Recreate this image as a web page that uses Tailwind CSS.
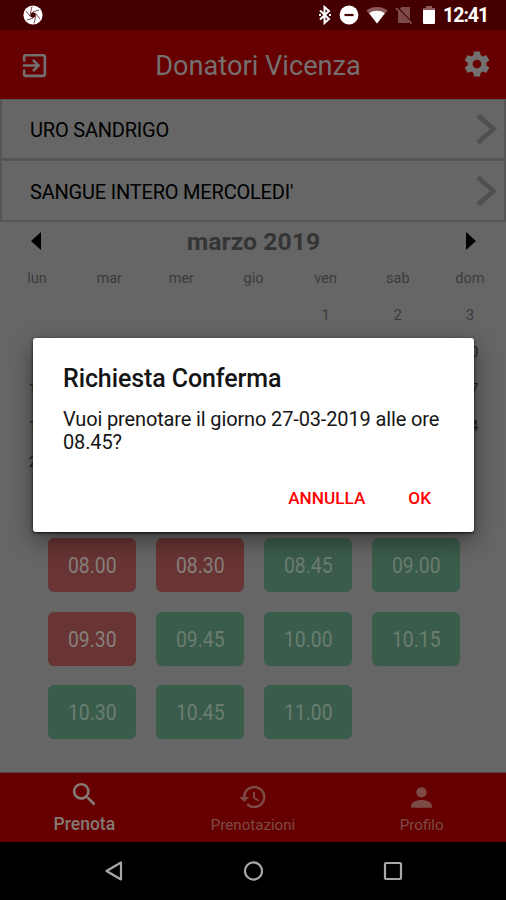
<!DOCTYPE html>
<html lang="it">
<head>
    <meta charset="UTF-8">
    <meta name="viewport" content="width=device-width, initial-scale=1.0">
    <title>Donatori Vicenza</title>
    <script src="https://cdn.jsdelivr.net/npm/@tailwindcss/browser@4"></script>
</head>
<body class="bg-black">
    <div class="relative w-[506px] h-[900px] overflow-hidden flex flex-col bg-[#666666] font-['Roboto',sans-serif]">

        <!-- Status bar -->
        <div class="h-[30px] shrink-0 bg-[#440000] flex items-center justify-between pl-[23px] pr-[19px] text-white">
            <svg class="size-5" viewBox="0 0 20 20">
                <circle cx="10" cy="10" r="9.6" fill="#fff"/>
                <path d="M10 6.9l2.7 1.6v3L10 13.1l-2.7-1.6v-3z" fill="#440000"/>
                <path d="M10 6.9L16 5M12.7 8.5L17 14M12.7 11.5L11 18.5M10 13.1L4 15M7.3 11.5L3 6M7.3 8.5L9 1.5" stroke="#440000" stroke-width="0.7" fill="none"/>
            </svg>
            <div class="flex items-center">
                <svg class="w-[14px] h-5" viewBox="0 0 14 20" fill="none" stroke="#fff" stroke-width="2">
                    <path d="M2 5.5l9 8.5-4.5 4V2L11 6l-9 8.5"/>
                    <path d="M1 10h2M11 10h2"/>
                </svg>
                <svg class="size-5 ml-[7px]" viewBox="0 0 20 20">
                    <circle cx="10" cy="10" r="9.4" fill="#fff"/>
                    <path d="M5.5 10h9" stroke="#440000" stroke-width="2.2"/>
                </svg>
                <svg class="w-[22px] h-5 ml-[7px]" viewBox="0 0 22 20">
                    <path d="M11 18.5L.5 5.4C6 .9 16 .9 21.5 5.4z" fill="#8c5858"/>
                    <path d="M11 18.5L3.2 8.2C7.5 4.9 14.5 4.9 18.8 8.2z" fill="#fff"/>
                </svg>
                <svg class="w-[18px] h-5 ml-[7px]" viewBox="0 0 18 20">
                    <path d="M6.5 2H15V18H3V5.5z" fill="#7c4a4a"/>
                    <path d="M2 3l15 15.5" stroke="#440000" stroke-width="3"/>
                    <path d="M1 3l15.5 15.5" stroke="#8c5c5c" stroke-width="1.6"/>
                </svg>
                <svg class="w-[14px] h-5 ml-[9px]" viewBox="0 0 14 20">
                    <path d="M4 1h6v2h3v4H1V3h3z" fill="#8c5858"/>
                    <path d="M1 5h12v13a1 1 0 0 1-1 1H2a1 1 0 0 1-1-1z" fill="#fff"/>
                </svg>
                <span class="ml-[7px] w-[44px] text-[19.5px] leading-5 font-bold tracking-[-1px] whitespace-nowrap pt-[2px]">12:41</span>
            </div>
        </div>

        <!-- App bar -->
        <div class="h-[69px] shrink-0 bg-[#660000] flex items-center justify-between pl-[19px] pr-[14px] pb-[1px] text-[#757070]">
            <svg class="w-[31px] h-[31px] mt-[3px]" viewBox="0 0 24 24" fill="currentColor">
                <path d="M10.09 15.59L11.5 17l5-5-5-5-1.41 1.41L12.67 11H3v2h9.67l-2.58 2.59zM19 3H5c-1.11 0-2 .9-2 2v4h2V5h14v14H5v-4H3v4c0 1.1.89 2 2 2h14c1.1 0 2-.9 2-2V5c0-1.1-.9-2-2-2z"/>
            </svg>
            <h1 class="text-[27.2px] leading-8 whitespace-nowrap pt-[4px] pl-[4px]">Donatori Vicenza</h1>
            <svg class="w-[30px] h-[30px]" viewBox="0 0 24 24" fill="currentColor">
                <path d="M19.43 12.98c.04-.32.07-.64.07-.98s-.03-.66-.07-.98l2.11-1.65c.19-.15.24-.42.12-.64l-2-3.46c-.12-.22-.39-.3-.61-.22l-2.49 1c-.52-.4-1.08-.73-1.69-.98l-.38-2.65C14.46 2.18 14.25 2 14 2h-4c-.25 0-.46.18-.49.42l-.38 2.65c-.61.25-1.17.59-1.69.98l-2.49-1c-.23-.09-.49 0-.61.22l-2 3.46c-.13.22-.07.49.12.64l2.11 1.65c-.04.32-.07.65-.07.98s.03.66.07.98l-2.11 1.65c-.19.15-.24.42-.12.64l2 3.46c.12.22.39.3.61.22l2.49-1c.52.4 1.08.73 1.69.98l.38 2.65c.03.24.24.42.49.42h4c.25 0 .46-.18.49-.42l.38-2.65c.61-.25 1.17-.59 1.69-.98l2.49 1c.23.09.49 0 .61-.22l2-3.46c.12-.22.07-.49-.12-.64l-2.11-1.65zM12 15.5c-1.93 0-3.5-1.57-3.5-3.5s1.57-3.5 3.5-3.5 3.5 1.57 3.5 3.5-1.57 3.5-3.5 3.5z"/>
            </svg>
        </div>

        <!-- Selections -->
        <div class="h-[61px] shrink-0 border-2 border-t border-[#555555] flex items-center justify-between pl-[28px] pr-[6px] text-black">
            <span class="text-[20px] leading-6 tracking-[-0.2px] pt-[2px]">URO SANDRIGO</span>
            <svg class="w-[22px] h-[32px]" viewBox="0 0 22 32" fill="none" stroke="#505050" stroke-width="4.8"><path d="M2 2.5l15.500 13.500L2 29.500"/></svg>
        </div>
        <div class="h-[62px] shrink-0 border-2 border-t border-[#555555] flex items-center justify-between pl-[28px] pr-[6px] text-black">
            <span class="text-[20px] leading-6 tracking-[-0.2px] pt-[2px]">SANGUE INTERO MERCOLEDI'</span>
            <svg class="w-[22px] h-[32px]" viewBox="0 0 22 32" fill="none" stroke="#505050" stroke-width="4.8"><path d="M2 2.5l15.500 13.500L2 29.500"/></svg>
        </div>

        <!-- Calendar -->
        <div class="h-[38px] shrink-0 flex items-center justify-between pl-[31px] pr-[30px]">
            <svg class="w-[10px] h-[18px]" viewBox="0 0 10 18"><path d="M10 0v18L0 9z" fill="#000"/></svg>
            <span class="text-[24.8px] leading-7 font-bold text-[#353535] pt-[1px]">marzo 2019</span>
            <svg class="w-[10px] h-[18px]" viewBox="0 0 10 18"><path d="M0 0v18l10-9z" fill="#000"/></svg>
        </div>
        <div class="h-[37px] shrink-0 grid grid-cols-7 items-center text-center text-[14.5px] text-[#3b3b3b] pl-[1px]">
            <span>lun</span><span>mar</span><span>mer</span><span>gio</span><span>ven</span><span>sab</span><span>dom</span>
        </div>
        <!-- Only the outer columns stay visible while the dialog is open -->
        <div class="h-[184px] shrink-0 grid grid-cols-7 grid-rows-5 items-center text-center text-[15px] text-[#222222] pl-[1px]">
            <span class="col-start-5 text-[#3b3b3b]">1</span><span class="text-[#3b3b3b]">2</span><span class="text-[#3b3b3b]">3</span>
            <span class="col-start-7">10</span>
            <span>11</span><span class="col-start-7">17</span>
            <span>18</span><span class="col-start-7">24</span>
            <span>25</span>
        </div>

        <!-- Time slots -->
        <div class="grow pt-[57px] px-12">
            <div class="grid grid-cols-[repeat(4,88px)] auto-rows-[54px] gap-x-5 gap-y-[19.5px] text-[22.5px] text-[#85807c]">
                <div class="rounded-[6px] bg-[#693434] flex items-center justify-center pt-[2px]"><span class="scale-x-[0.86]">08.00</span></div>
                <div class="rounded-[6px] bg-[#693434] flex items-center justify-center pt-[2px]"><span class="scale-x-[0.86]">08.30</span></div>
                <div class="rounded-[6px] bg-[#3a5c4b] flex items-center justify-center pt-[2px] text-[#6b7c70]"><span class="scale-x-[0.86]">08.45</span></div>
                <div class="rounded-[6px] bg-[#3a5c4b] flex items-center justify-center pt-[2px] text-[#6b7c70]"><span class="scale-x-[0.86]">09.00</span></div>
                <div class="rounded-[6px] bg-[#693434] flex items-center justify-center pt-[2px]"><span class="scale-x-[0.86]">09.30</span></div>
                <div class="rounded-[6px] bg-[#3a5c4b] flex items-center justify-center pt-[2px] text-[#6b7c70]"><span class="scale-x-[0.86]">09.45</span></div>
                <div class="rounded-[6px] bg-[#3a5c4b] flex items-center justify-center pt-[2px] text-[#6b7c70]"><span class="scale-x-[0.86]">10.00</span></div>
                <div class="rounded-[6px] bg-[#3a5c4b] flex items-center justify-center pt-[2px] text-[#6b7c70]"><span class="scale-x-[0.86]">10.15</span></div>
                <div class="rounded-[6px] bg-[#3a5c4b] flex items-center justify-center pt-[2px] text-[#6b7c70]"><span class="scale-x-[0.86]">10.30</span></div>
                <div class="rounded-[6px] bg-[#3a5c4b] flex items-center justify-center pt-[2px] text-[#6b7c70]"><span class="scale-x-[0.86]">10.45</span></div>
                <div class="rounded-[6px] bg-[#3a5c4b] flex items-center justify-center pt-[2px] text-[#6b7c70]"><span class="scale-x-[0.86]">11.00</span></div>
            </div>
        </div>

        <!-- Tabs -->
        <div class="h-[70px] shrink-0 bg-[#660000] border-t border-[#5c4040] grid grid-cols-3 text-[#7d4a46]">
            <div class="flex flex-col items-center text-[#857a75] pt-[6px]">
                <svg class="w-[31px] h-[31px]" viewBox="0 0 24 24" fill="currentColor"><path d="M15.5 14h-.79l-.28-.27C15.41 12.59 16 11.11 16 9.5 16 5.91 13.09 3 9.5 3S3 5.91 3 9.5 5.91 16 9.5 16c1.61 0 3.09-.59 4.23-1.57l.27.28v.79l5 4.99L20.49 19l-4.99-5zm-6 0C7.01 14 5 11.99 5 9.5S7.01 5 9.5 5 14 7.01 14 9.5 11.99 14 9.5 14z"/></svg>
                <span class="text-[17.5px] leading-5 font-medium mt-[4px]">Prenota</span>
            </div>
            <div class="flex flex-col items-center pt-[9px]">
                <svg class="w-[30px] h-[30px]" viewBox="0 0 24 24" fill="currentColor"><path d="M13 3c-4.97 0-9 4.03-9 9H1l3.89 3.89.07.14L9 12H6c0-3.87 3.13-7 7-7s7 3.13 7 7-3.13 7-7 7c-1.93 0-3.68-.79-4.94-2.06l-1.42 1.42C8.27 19.99 10.51 21 13 21c4.97 0 9-4.03 9-9s-4.03-9-9-9zm-1 5v5l4.28 2.54.72-1.21-3.5-2.08V8H12z"/></svg>
                <span class="text-[15.1px] leading-5 mt-[3px]">Prenotazioni</span>
            </div>
            <div class="flex flex-col items-center pt-[9px]">
                <svg class="w-[31px] h-[31px]" viewBox="0 0 24 24" fill="currentColor"><path d="M12 12c2.21 0 4-1.79 4-4s-1.79-4-4-4-4 1.79-4 4 1.79 4 4 4zm0 2c-2.67 0-8 1.34-8 4v2h16v-2c0-2.66-5.33-4-8-4z"/></svg>
                <span class="text-[15.1px] leading-5 mt-[2px]">Profilo</span>
            </div>
        </div>

        <!-- Navigation bar -->
        <div class="h-[58px] shrink-0 bg-black flex items-center justify-between px-[103px]">
            <svg class="size-5" viewBox="0 0 20 20" fill="none" stroke="#a8a8a8" stroke-width="2.2"><path d="M18 1.5v17L3.5 10z" stroke-linejoin="round"/></svg>
            <svg class="size-5" viewBox="0 0 20 20" fill="none" stroke="#a8a8a8" stroke-width="2.2"><circle cx="10.5" cy="10" r="8.6"/></svg>
            <svg class="size-5" viewBox="0 0 20 20" fill="none" stroke="#a8a8a8" stroke-width="2.2"><rect x="2" y="2" width="16" height="16" rx="1"/></svg>
        </div>

        <!-- Confirmation dialog -->
        <div class="absolute left-[33px] top-[338px] w-[441px] h-[194px] rounded-[3px] bg-white shadow-[0_8px_24px_rgba(0,0,0,0.45),0_1px_3px_rgba(0,0,0,0.8)] px-[30px] pt-[26px] text-black flex flex-col">
            <h2 class="text-[25px] leading-[30px] font-medium tracking-[-0.1px] text-[#151515] whitespace-nowrap">Richiesta Conferma</h2>
            <p class="mt-[14px] text-[20px] leading-[23px] tracking-[-0.14px] text-[#151515] whitespace-nowrap">Vuoi prenotare il giorno 27-03-2019 alle ore<br>08.45?</p>
            <div class="mt-[32px] flex justify-end gap-[43px] pr-[13px] text-[17.2px] leading-6 font-medium text-[#ff0000]">
                <button>ANNULLA</button>
                <button>OK</button>
            </div>
        </div>
    </div>
</body>
</html>
